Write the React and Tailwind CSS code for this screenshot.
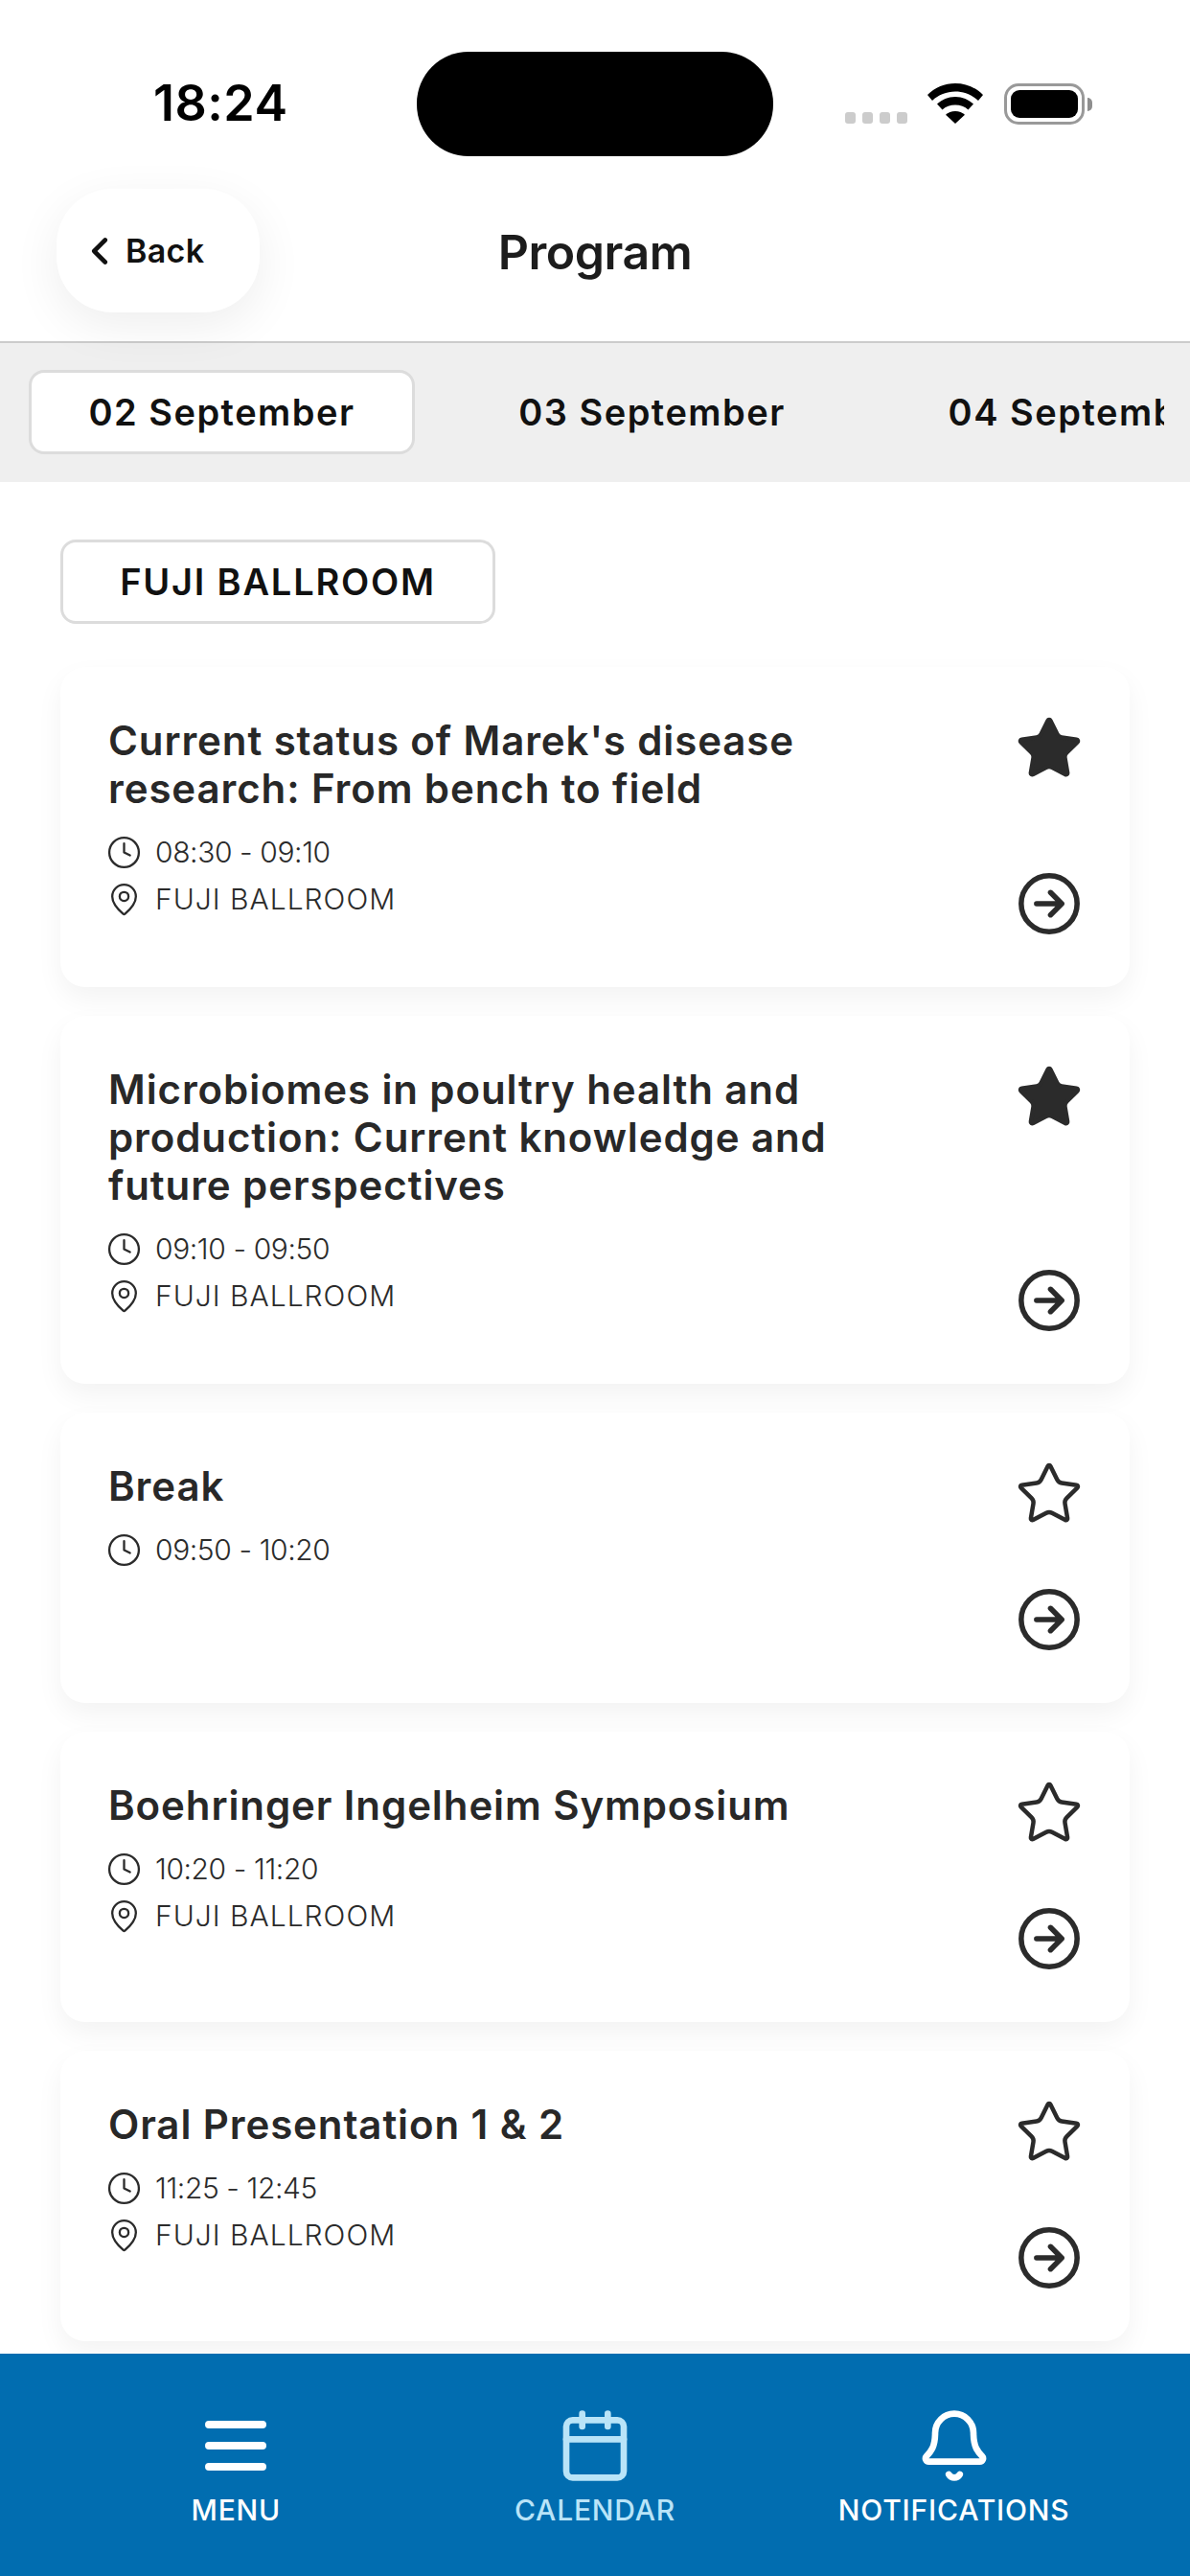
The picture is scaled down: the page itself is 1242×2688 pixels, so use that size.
import { Bell, Calendar, ChevronLeft, Clock, MapPin, Star } from "lucide-react";

const sessions = [
  { title: ["Current status of Marek's disease", "research: From bench to field"], time: "08:30 - 09:10", room: "FUJI BALLROOM", starred: true },
  { title: ["Microbiomes in poultry health and", "production: Current knowledge and", "future perspectives"], time: "09:10 - 09:50", room: "FUJI BALLROOM", starred: true },
  { title: ["Break"], time: "09:50 - 10:20", starred: false },
  { title: ["Boehringer Ingelheim Symposium"], time: "10:20 - 11:20", room: "FUJI BALLROOM", starred: false },
  { title: ["Oral Presentation 1 & 2"], time: "11:25 - 12:45", room: "FUJI BALLROOM", starred: false },
];

function Wifi() {
  return (
    <svg width="58" height="42" viewBox="0 0 58 42" fill="#000">
      <path d="M29 0C18 0 8 4 0 12l5 6c6.500-6 15-9.500 24-9.500S46.500 12 53 18l5-6C50 4 40 0 29 0z" />
      <path d="M29 14c-7.500 0-14 3-19 7.500l5.500 6c3.500-3.200 8.300-5 13.500-5s10 1.800 13.500 5l5.500-6C43 17 36.500 14 29 14z" />
      <path d="M29 29c-4 0-7.500 1.400-10 3.800L29 42l10-9.200C36.500 30.400 33 29 29 29z" />
    </svg>
  );
}

function Battery() {
  return (
    <div className="flex items-center gap-[3px]">
      <div className="w-[84px] h-[43px] rounded-[15px] border-[3px] border-[#999999] p-[4px]">
        <div className="w-full h-full rounded-[9px] bg-black" />
      </div>
      <div className="w-[5px] h-[14px] rounded-r-full bg-[#8e8e8e]" />
    </div>
  );
}

function ArrowCircle() {
  return (
    <svg width="70" height="70" viewBox="0 0 24 24" fill="none" stroke="#2b2b2b" strokeWidth="1.9" strokeLinecap="round" strokeLinejoin="round">
      <circle cx="12" cy="12" r="10" />
      <path d="M7.500 12h9M12.500 8l4 4-4 4" />
    </svg>
  );
}

function SessionCard({ session }) {
  return (
    <div className="flex justify-between rounded-[26px] bg-white pl-[50px] pr-[48px] pt-[52px] pb-[52px] shadow-[0_12px_28px_rgba(0,0,0,0.05)]">
      <div className="pb-[15px]">
        <div className="text-[42px] leading-[50px] font-semibold text-[#282828] tracking-[0.9px]">
          {session.title.map((line) => (
            <div key={line}>{line}</div>
          ))}
        </div>
        <div className="mt-[17px] text-[30px] leading-[49px] font-light text-[#2b2b2b]">
          <div className="flex items-center gap-[14px] tracking-[-0.4px]">
            <Clock size={37} strokeWidth={1.5} className="-ml-[2px]" />
            {session.time}
          </div>
          {session.room && (
            <div className="flex items-center gap-[14px] tracking-[1px]">
              <MapPin size={37} strokeWidth={1.5} className="-ml-[2px]" />
              {session.room}
            </div>
          )}
        </div>
      </div>
      <div className="-mt-[3px] flex flex-col justify-between items-center gap-[60px]">
        <Star size={72} strokeWidth={1.5} color="#2b2b2b" fill={session.starred ? "#2b2b2b" : "none"} />
        <ArrowCircle />
      </div>
    </div>
  );
}

export default function App() {
  return (
    <div className="relative w-[1242px] h-[2688px] overflow-hidden bg-white flex flex-col font-['Inter',sans-serif]">
      {/* Status bar */}
      <div className="h-[197px] shrink-0 flex items-start pl-[160px] pt-[54px]">
        <div className="w-[138px] mt-[22px] text-[52px] leading-[64px] font-semibold text-black tracking-[0.5px]">18:24</div>
        <div className="ml-[137px] w-[372px] h-[109px] rounded-[54px] bg-black" />
        <div className="ml-[75px] mt-[63px] flex gap-[7px]">
          {[0, 1, 2, 3].map((i) => (
            <div key={i} className="w-[11px] h-[12px] rounded-[3px] bg-[#cccccc]" />
          ))}
        </div>
        <div className="ml-[21px] mt-[33px]"><Wifi /></div>
        <div className="ml-[22px] mt-[33px]"><Battery /></div>
      </div>

      {/* Header */}
      <div className="relative z-10 h-[161px] shrink-0 grid grid-cols-[1fr_auto_1fr] items-start border-b-2 border-[#cccccc] pl-[59px]">
        <div className="w-[212px] h-[129px] rounded-[58px] bg-white flex items-center pl-[22px] shadow-[0_14px_50px_rgba(0,0,0,0.07)]">
          <ChevronLeft size={46} strokeWidth={2.4} color="#111111" />
          <span className="ml-[4px] text-[34px] font-semibold text-[#111111] tracking-[0.3px]">Back</span>
        </div>
        <div className="mt-[36px] -ml-[59px] text-[50px] leading-[60px] font-semibold text-[#1c1c1c] tracking-[-0.5px]">Program</div>
      </div>

      {/* Day tabs */}
      <div className="h-[145px] shrink-0 bg-[#efefef] pl-[30px] pr-[27px] pt-[28px]">
        <div className="flex gap-[46px] overflow-hidden">
          {["02 September", "03 September", "04 September"].map((day, i) => (
            <div
              key={day}
              className={`w-[403px] h-[88px] shrink-0 rounded-[16px] border-[3px] flex items-center justify-center text-[38px] font-semibold text-[#111111] tracking-[1.5px] ${
                i === 0 ? "bg-white border-[#dcdcdc]" : "border-transparent"
              }`}
            >
              {day}
            </div>
          ))}
        </div>
      </div>

      {/* Sessions */}
      <div className="flex-1 min-h-0 overflow-hidden px-[63px] pt-[60px]">
        <div className="w-[454px] h-[88px] rounded-[16px] border-[3px] border-[#dcdcdc] bg-white flex items-center justify-center text-[38px] font-semibold text-[#111111] tracking-[1.8px]">
          FUJI BALLROOM
        </div>
        <div className="mt-[45px] flex flex-col gap-[30px]">
          {sessions.map((session) => (
            <SessionCard key={session.time} session={session} />
          ))}
        </div>
      </div>

      {/* Bottom nav */}
      <div className="h-[232px] shrink-0 bg-[#016db0] grid grid-cols-3 px-[59px] pt-[54px] text-[30px] font-medium text-white tracking-[0.8px]">
        <div className="flex flex-col items-center">
          <div className="h-[84px] flex items-center">
            <svg width="64" height="52" viewBox="0 0 64 52" fill="none" stroke="#ffffff" strokeWidth="8" strokeLinecap="round">
              <path d="M4 4h56M4 26h56M4 48h56" />
            </svg>
          </div>
          <div className="mt-[5px] leading-[40px]">MENU</div>
        </div>
        <div className="flex flex-col items-center text-[#b9e4f8]">
          <div className="h-[84px] flex items-center">
            <Calendar size={80} strokeWidth={2} />
          </div>
          <div className="mt-[5px] leading-[40px]">CALENDAR</div>
        </div>
        <div className="flex flex-col items-center">
          <div className="h-[84px] flex items-center">
            <Bell size={80} strokeWidth={2} />
          </div>
          <div className="mt-[5px] leading-[40px]">NOTIFICATIONS</div>
        </div>
      </div>
    </div>
  );
}
